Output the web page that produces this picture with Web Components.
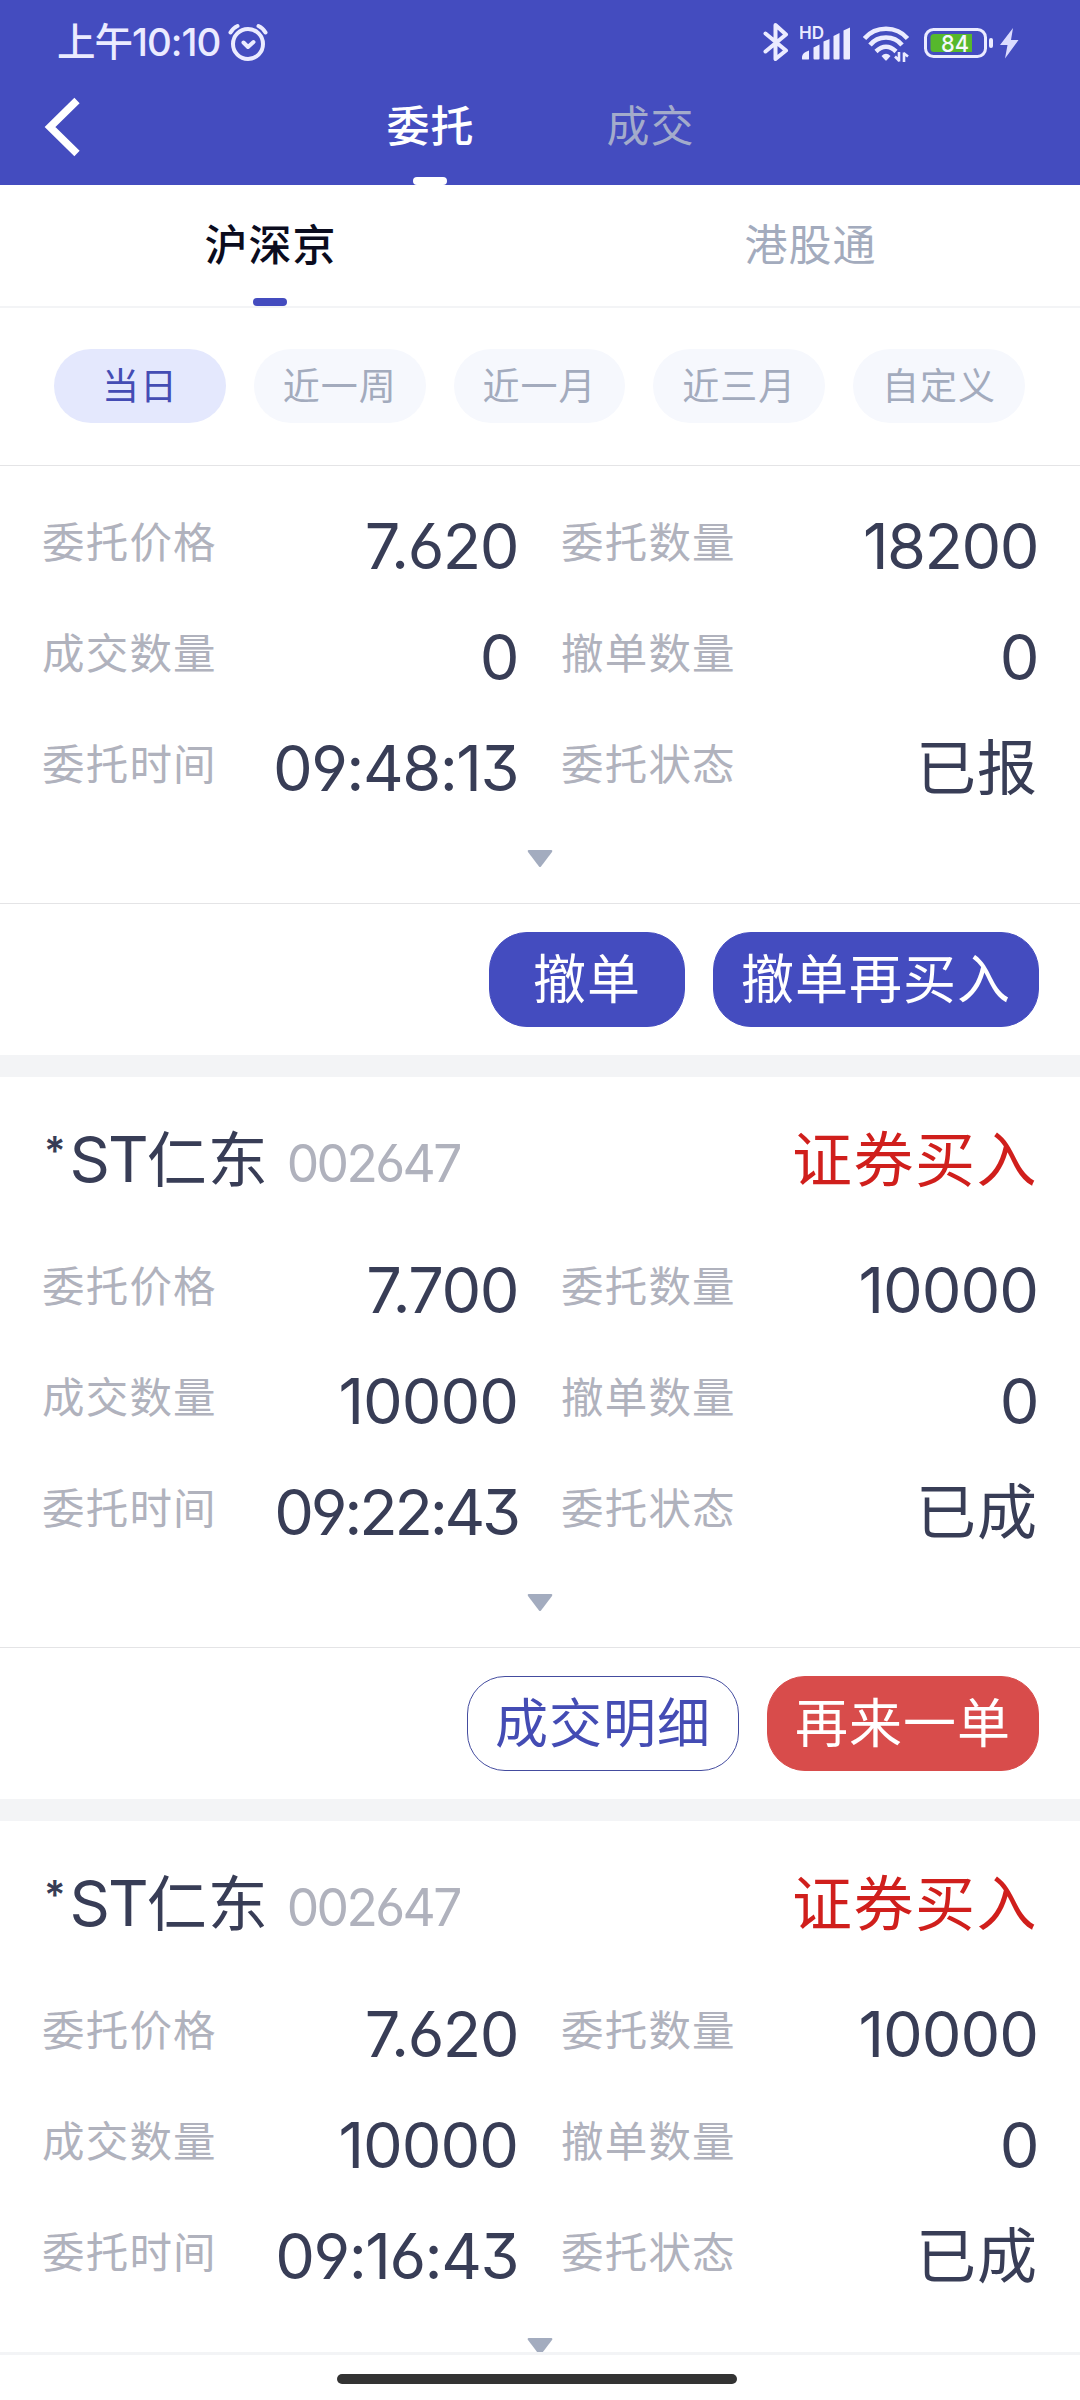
<!DOCTYPE html>
<html lang="zh-CN">
<head>
<meta charset="utf-8">
<title>委托</title>
<style>
    body {
        margin: 0;
        background: #fff;
        font-family: "Inter", "Noto Sans CJK SC", sans-serif;
        font-feature-settings: "cv03", "cv04", "cv09";
    }
</style>
</head>
<body>
<trade-app></trade-app>

<script>
class StatusBar extends HTMLElement {

    constructor() {
        super();
        this.shadowDOM = this.attachShadow({mode: "open"});
    }

    connectedCallback(){
        this.render();
    }

    render() {
        this.shadowDOM.innerHTML = `
        <style>
            :host {
                display: flex;
                align-items: center;
                height: 84px;
                padding: 0 61px 0 57px;
                box-sizing: border-box;
                color: #ebebff;
            }
            .time {
                font-size: 38.5px;
                line-height: 84px;
                font-weight: 500;
                letter-spacing: -1px;
                white-space: nowrap;
            }
            svg {
                display: block;
                flex: none;
            }
            .alarm {
                margin-left: 8px;
            }
            .icons {
                display: flex;
                align-items: center;
                margin-left: auto;
            }
        </style>
        <div class="time">上午10:10</div>
        <svg class="alarm" width="40" height="40" viewBox="0 0 40 40" fill="none" stroke="#ebebff" stroke-width="4" stroke-linecap="round" stroke-linejoin="round">
            <circle cx="20" cy="22" r="15"/>
            <path d="M2.5 10.500Q5 6 9.500 4M37.500 10.500Q35 6 30.500 4M15.500 20.500L20 25L25.500 20"/>
        </svg>
        <div class="icons">
            <svg width="37" height="40" viewBox="0 0 37 40" fill="none" stroke="#ebebff" stroke-width="4" stroke-linecap="round" stroke-linejoin="round">
                <path d="M2.500 11.500L23 28.500L12.500 37V3L23 12.500L2.500 29.500"/>
            </svg>
            <svg width="63" height="40" viewBox="0 0 63 40" fill="#ebebff">
                <text x="-1" y="16.500" font-size="17" font-weight="600" textLength="25" lengthAdjust="spacingAndGlyphs">HD</text>
                <path d="M2 37V34.500Q2.500 30.500 9 28.500V37Q9 37.500 8 37.500H3Q2 37.500 2 37Z"/>
                <path d="M13.500 36.500V25.500L19.500 22.500V36.500Q19.500 37.500 18.500 37.500H14.500Q13.500 37.500 13.500 36.500Z"/>
                <path d="M23.500 36.500V19.500L29.500 17V36.500Q29.500 37.500 28.500 37.500H24.500Q23.500 37.500 23.500 36.500Z"/>
                <path d="M33.500 36.500V14L39.500 11V36.500Q39.500 37.500 38.500 37.500H34.500Q33.500 37.500 33.500 36.500Z"/>
                <path d="M43.500 36.500V8.500L50 5.500V36.500Q50 37.500 49 37.500H44.500Q43.500 37.500 43.500 36.500Z"/>
            </svg>
            <svg width="61" height="40" viewBox="0 0 61 40" fill="none" stroke="#ebebff" stroke-width="4.500">
                <path d="M1.500 16.500C12.500 3.500 33.500 3.500 44.500 16.500M7 23C15 13 31 13 39 23M13 29.500Q23 20 33 29.500"/>
                <path fill="#ebebff" stroke="none" d="M18.500 34Q23 29.500 27.500 34L23.500 38.500H22.500Z"/>
                <path stroke-width="2.600" d="M36 30V39.500M36.500 39L32 34.500M41 40V30.500M40.500 31L45 34.500"/>
            </svg>
            <svg width="76" height="40" viewBox="0 0 76 40">
                <rect x="1.500" y="7.500" width="60" height="27" rx="8" fill="none" stroke="#ebebff" stroke-width="3"/>
                <path fill="#56b82c" d="M10 12H48V30H10Q6.500 30 6.500 26.500V15.500Q6.500 12 10 12Z"/>
                <rect x="65" y="16" width="4" height="10" rx="2" fill="#ebebff"/>
                <text x="17" y="29.500" font-size="23.500" font-weight="500" fill="#f4f8ff" textLength="28" lengthAdjust="spacingAndGlyphs">84</text>
            </svg>
            <svg width="19" height="40" viewBox="0 0 19 40" fill="#dcdcff">
                <path d="M13 6L0 23H7.500L5 36.500L18.500 18H11Z"/>
            </svg>
        </div>
        `;
    }
}

customElements.define("status-bar", StatusBar);

class NavTab extends HTMLElement {

    constructor() {
        super();
        this.shadowDOM = this.attachShadow({mode: "open"});
    }

    connectedCallback(){
        this.render();
    }

    render() {
        this.shadowDOM.innerHTML = `
        <style>
            :host {
                display: flex;
                flex-direction: column;
                align-items: center;
                font-size: 43px;
                letter-spacing: 1px;
                color: var(--tab-color, #a3abbd);
            }
            :host([active]) {
                color: var(--tab-active, #0b0c1e);
                font-weight: 500;
            }
            .label {
                padding-top: var(--tab-offset, 35px);
                padding-left: 1px;
                line-height: 50px;
            }
            .bar {
                width: 34px;
                height: 8px;
                margin-top: auto;
                border-radius: 4px;
            }
            :host([active]) .bar {
                background: var(--tab-bar, #444cbf);
            }
        </style>
        <div class="label"><slot></slot></div>
        <div class="bar"></div>
        `;
    }
}

customElements.define("nav-tab", NavTab);

class AppBar extends HTMLElement {

    constructor() {
        super();
        this.shadowDOM = this.attachShadow({mode: "open"});
    }

    connectedCallback(){
        this.render();
    }

    render() {
        this.shadowDOM.innerHTML = `
        <style>
            :host {
                display: grid;
                grid-template-columns: 320px 220px 220px 320px;
                height: 101px;
                --tab-color: #a3abcb;
                --tab-active: #fff;
                --tab-bar: #fff;
                --tab-offset: 17px;
            }
            svg {
                display: block;
                margin: 13px 0 0 44px;
            }
        </style>
        <svg width="40" height="60" viewBox="0 0 40 60" fill="none" stroke="#fff" stroke-width="7.500">
            <path d="M33 3.500L6 30L33 56.500"/>
        </svg>
        <nav-tab active>委托</nav-tab>
        <nav-tab>成交</nav-tab>
        `;
    }
}

customElements.define("app-bar", AppBar);

class FilterChip extends HTMLElement {

    constructor() {
        super();
        this.shadowDOM = this.attachShadow({mode: "open"});
    }

    connectedCallback(){
        this.render();
    }

    render() {
        this.shadowDOM.innerHTML = `
        <style>
            :host {
                display: block;
                height: 74px;
                border-radius: 37px;
                background: #f6f8fd;
                color: #a3abbd;
                font-size: 37px;
                letter-spacing: 1px;
                line-height: 75px;
                text-align: center;
            }
            :host([active]) {
                background: #e4e8fd;
                color: #444cb4;
            }
        </style>
        <slot></slot>
        `;
    }
}

customElements.define("filter-chip", FilterChip);

class PillButton extends HTMLElement {

    constructor() {
        super();
        this.shadowDOM = this.attachShadow({mode: "open"});
    }

    connectedCallback(){
        this.render();
    }

    render() {
        this.shadowDOM.innerHTML = `
        <style>
            :host {
                display: block;
                box-sizing: border-box;
                height: 95px;
                min-width: 196px;
                padding: 0 27px;
                border: 1px solid #444cbf;
                border-radius: 38px;
                background: #444cbf;
                color: #fff;
                font-size: 53px;
                letter-spacing: 1px;
                line-height: 95px;
                text-align: center;
                white-space: nowrap;
            }
            :host([kind="outline"]) {
                background: #fff;
                border-color: #444c9f;
                color: #444cb4;
            }
            :host([kind="danger"]) {
                background: #d84c4b;
                border-color: #d84c4b;
            }
        </style>
        <slot></slot>
        `;
    }
}

customElements.define("pill-button", PillButton);

class OrderField extends HTMLElement {

    constructor() {
        super();
        this.shadowDOM = this.attachShadow({mode: "open"});
    }

    connectedCallback(){
        this.render();
    }

    render() {
        this.shadowDOM.innerHTML = `
        <style>
            :host {
                display: flex;
                justify-content: space-between;
                height: 111px;
                line-height: 111px;
                white-space: nowrap;
            }
            .label {
                padding-top: 2px;
                font-size: 42.5px;
                letter-spacing: 1.2px;
                color: #b0b2bd;
            }
            .value {
                padding-top: 6px;
                font-size: 63px;
                letter-spacing: var(--value-spacing, -1.5px);
                color: #383d56;
            }
            :host([text]) .value {
                font-size: 60px;
                letter-spacing: 1px;
            }
        </style>
        <div class="label">${this.getAttribute("label")}</div>
        <div class="value"><slot></slot></div>
        `;
    }
}

customElements.define("order-field", OrderField);

class OrderCard extends HTMLElement {

    constructor() {
        super();
        this.shadowDOM = this.attachShadow({mode: "open"});
    }

    connectedCallback(){
        this.render();
    }

    render() {
        const code = this.getAttribute("code");
        const title = code ? `
        <header>
            <div class="name"><span class="star">*</span><span class="latin">ST</span>仁东</div>
            <div class="code">${code}</div>
            <div class="side">证券买入</div>
        </header>` : "";

        this.shadowDOM.innerHTML = `
        <style>
            :host {
                display: block;
                background: #fff;
            }
            header {
                display: flex;
                align-items: baseline;
                height: 152px;
                padding: 0 42px;
                line-height: 165px;
                color: #383d56;
                white-space: nowrap;
            }
            .name {
                font-size: 60px;
                letter-spacing: 1px;
            }
            .star {
                margin: 0 4px 0 2px;
                font-size: 40px;
                font-weight: 600;
                line-height: 0;
                letter-spacing: 0;
                vertical-align: 17px;
            }
            .latin {
                font-size: 63px;
                letter-spacing: -2px;
            }
            .code {
                margin-left: 18px;
                font-size: 51.5px;
                letter-spacing: -2.6px;
                color: #b0b2bd;
            }
            .side {
                margin-left: auto;
                font-size: 60px;
                letter-spacing: 1.5px;
                color: #d01f1c;
            }
            .fields {
                display: grid;
                grid-template-columns: 476px 477px;
                column-gap: 43px;
                padding-left: 42px;
            }
            :host(:not([code])) .fields {
                padding-top: 19px;
            }
            .expand {
                display: flex;
                justify-content: center;
                height: 85px;
                padding-top: 32px;
                box-sizing: border-box;
            }
            svg {
                display: block;
            }
            footer {
                display: flex;
                justify-content: flex-end;
                gap: 28px;
                padding: 28px 41px 28px 0;
                border-top: 1px solid #e4e4e6;
            }
        </style>
        ${title}
        <div class="fields"><slot></slot></div>
        <div class="expand">
            <svg width="26" height="18" viewBox="0 0 26 18" fill="#a3acbf"><path d="M1.500 0H24.500Q26 0.500 25 2L14 16.500Q13 17.500 12 16.500L1 2Q0 0.500 1.500 0Z"/></svg>
        </div>
        <footer><slot name="actions"></slot></footer>
        `;
    }
}

customElements.define("order-card", OrderCard);

class TradeApp extends HTMLElement {

    constructor() {
        super();
        this.shadowDOM = this.attachShadow({mode: "open"});
    }

    connectedCallback(){
        this.render();
    }

    render() {
        this.shadowDOM.innerHTML = `
        <style>
            :host {
                display: flex;
                flex-direction: column;
                width: 1080px;
                height: 2400px;
                overflow: hidden;
                background: #fff;
            }
            .top {
                flex: none;
                height: 185px;
                background: #444cbf;
            }
            .markets {
                flex: none;
                display: grid;
                grid-template-columns: 1fr 1fr;
                height: 121px;
                border-bottom: 2px solid #f3f4f6;
            }
            .filters {
                flex: none;
                display: grid;
                grid-template-columns: repeat(5, 1fr);
                column-gap: 28px;
                height: 157px;
                padding: 41px 55px 0 54px;
                box-sizing: border-box;
            }
            .orders {
                flex: 1;
                min-height: 0;
                overflow: hidden;
                display: flex;
                flex-direction: column;
                gap: 22px;
                border-top: 1px solid #e4e4e6;
                background: #f3f4f6;
            }
            order-card {
                flex: none;
            }
            .wide {
                --value-spacing: -1px;
            }
            .tight {
                --value-spacing: -3.2px;
            }
            .home {
                flex: none;
                display: flex;
                justify-content: center;
                height: 48px;
                padding-top: 19px;
                box-sizing: border-box;
                border-top: 3px solid #f3f4f6;
            }
            .home div {
                width: 400px;
                height: 10px;
                margin-right: 7px;
                border-radius: 5px;
                background: #333;
            }
        </style>
        <div class="top">
            <status-bar></status-bar>
            <app-bar></app-bar>
        </div>
        <div class="markets">
            <nav-tab active>沪深京</nav-tab>
            <nav-tab>港股通</nav-tab>
        </div>
        <div class="filters">
            <filter-chip active>当日</filter-chip>
            <filter-chip>近一周</filter-chip>
            <filter-chip>近一月</filter-chip>
            <filter-chip>近三月</filter-chip>
            <filter-chip>自定义</filter-chip>
        </div>
        <div class="orders">
            <order-card>
                <order-field label="委托价格">7.620</order-field>
                <order-field label="委托数量">18200</order-field>
                <order-field label="成交数量">0</order-field>
                <order-field label="撤单数量">0</order-field>
                <order-field label="委托时间">09:48:13</order-field>
                <order-field label="委托状态" text>已报</order-field>
                <pill-button slot="actions">撤单</pill-button>
                <pill-button slot="actions">撤单再买入</pill-button>
            </order-card>
            <order-card code="002647">
                <order-field label="委托价格">7.700</order-field>
                <order-field label="委托数量" class="wide">10000</order-field>
                <order-field label="成交数量" class="wide">10000</order-field>
                <order-field label="撤单数量">0</order-field>
                <order-field label="委托时间" class="tight">09:22:43</order-field>
                <order-field label="委托状态" text>已成</order-field>
                <pill-button slot="actions" kind="outline">成交明细</pill-button>
                <pill-button slot="actions" kind="danger">再来一单</pill-button>
            </order-card>
            <order-card code="002647">
                <order-field label="委托价格">7.620</order-field>
                <order-field label="委托数量" class="wide">10000</order-field>
                <order-field label="成交数量" class="wide">10000</order-field>
                <order-field label="撤单数量">0</order-field>
                <order-field label="委托时间">09:16:43</order-field>
                <order-field label="委托状态" text>已成</order-field>
            </order-card>
        </div>
        <div class="home"><div></div></div>
        `;
    }
}

customElements.define("trade-app", TradeApp);
</script>
</body>
</html>
